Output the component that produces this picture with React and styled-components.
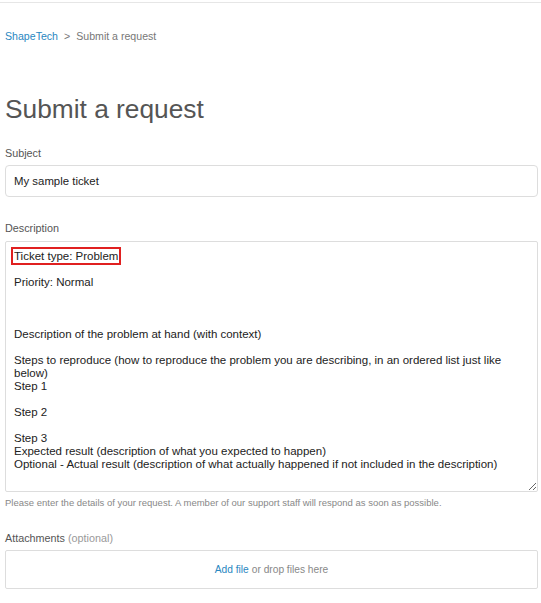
import React from "react";
import styled, { createGlobalStyle } from "styled-components";

const GlobalStyle = createGlobalStyle`
  body {
    margin: 0;
    background: #fff;
    font-family: "Liberation Sans", Arial, sans-serif;
    color: #333;
  }
`;

const TopBar = styled.div`
  height: 2px;
  border-bottom: 1px solid #e6e6e6;
`;

const Page = styled.div`
  padding: 0 3px 0 5px;
`;

const Breadcrumbs = styled.nav`
  margin-top: 26px;
  font-size: 10.6px;
  line-height: 14px;
  color: #777;
  a {
    color: #2a87c1;
    text-decoration: none;
  }
  span.sep {
    margin: 0 6px;
  }
`;

const Title = styled.h1`
  margin: 49px 0 0;
  font-size: 26.3px;
  line-height: 34px;
  font-weight: 400;
  color: #555;
`;

const Field = styled.div`
  margin-top: ${props => props.gap || 0}px;
`;

const Label = styled.label`
  display: block;
  font-size: 10.8px;
  line-height: 14px;
  color: #555;
  margin-bottom: ${props => props.space || 5}px;
  span {
    color: #999;
  }
`;

const Input = styled.div`
  height: 32px;
  box-sizing: border-box;
  border: 1px solid #ddd;
  border-radius: 4px;
  padding: 0 8px;
  display: flex;
  align-items: center;
  font-size: 11.4px;
  color: #222;
`;

const TextArea = styled.div`
  height: 251px;
  box-sizing: border-box;
  border: 1px solid #ddd;
  border-radius: 2px;
  padding: 8px 8px 7px;
  font-size: 11.5px;
  line-height: 13px;
  color: #222;
  white-space: pre-wrap;
  overflow: hidden;
  resize: vertical;
`;

const Marked = styled.span`
  outline: 2px solid #e02020;
  outline-offset: 1px;
`;

const Hint = styled.p`
  margin: 5px 0 0;
  font-size: 9.5px;
  line-height: 12px;
  color: #888;
`;

const DropZone = styled.div`
  height: 39px;
  box-sizing: border-box;
  border: 1px solid #ddd;
  border-radius: 2px;
  display: flex;
  align-items: center;
  justify-content: center;
  font-size: 10.2px;
  color: #888;
  a {
    color: #2a87c1;
    text-decoration: none;
    margin-right: 3px;
  }
`;

const description = `

Priority: Normal



Description of the problem at hand (with context)

Steps to reproduce (how to reproduce the problem you are describing, in an ordered list just like below)
Step 1

Step 2

Step 3
Expected result (description of what you expected to happen)
Optional - Actual result (description of what actually happened if not included in the description)`;

export default function App() {
  return (
    <>
      <GlobalStyle />
      <TopBar />
      <Page>
        <Breadcrumbs>
          <a href="#">ShapeTech</a>
          <span className="sep">&gt;</span>
          Submit a request
        </Breadcrumbs>
        <Title>Submit a request</Title>

        <Field gap={20}>
          <Label>Subject</Label>
          <Input>My sample ticket</Input>
        </Field>

        <Field gap={24}>
          <Label space={6}>Description</Label>
          <TextArea>
            <Marked>Ticket type: Problem</Marked>
            {description}
          </TextArea>
          <Hint>
            Please enter the details of your request. A member of our support staff will respond as soon as possible.
          </Hint>
        </Field>

        <Field gap={22}>
          <Label>
            Attachments <span>(optional)</span>
          </Label>
          <DropZone>
            <a href="#">Add file</a> or drop files here
          </DropZone>
        </Field>
      </Page>
    </>
  );
}
